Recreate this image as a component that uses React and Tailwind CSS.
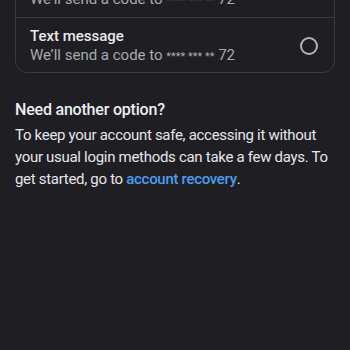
export default function App() {
  return (
    <div className="w-[350px] h-[350px] overflow-hidden bg-[#1f1f23] text-white" style={{ fontFamily: "Roboto, 'Noto Sans', sans-serif" }}>
      <div className="px-[15px]">
        <div className="mt-[-40px] rounded-[12px] border border-[#3a3b40]">
          <div className="flex items-center justify-between px-[14px] py-[8px] border-b border-[#3a3b40]">
            <div>
              <div className="text-[15px] leading-[20px] font-medium text-[#e8e9ec]">WhatsApp</div>
              <div className="text-[15px] leading-[20px] text-[#a7a9ad]">We’ll send a code to <span className="text-[11px] leading-none">**** *** **</span> 72</div>
            </div>
          </div>
          <div className="flex items-center justify-between px-[14px] pt-[9px] pb-[7px]">
            <div>
              <div className="text-[15px] leading-[19px] font-medium text-[#e8e9ec]">Text message</div>
              <div className="text-[15px] leading-[19px] text-[#a7a9ad]">We’ll send a code to <span className="text-[11px] leading-none">**** *** **</span> 72</div>
            </div>
            <div className="w-[18px] h-[18px] rounded-full border-[2px] border-[#b0b2b6] mr-[2px]" />
          </div>
        </div>
        <div className="mt-[27px] text-[16px] leading-[20px] font-medium tracking-[-0.2px] text-[#eceef0]">Need another option?</div>
        <p className="mt-[4px] text-[15px] leading-[22px] tracking-[-0.3px] text-[#e4e6ea]">
          To keep your account safe, accessing it without your usual login methods can take a few days. To get started, go to <span className="text-[#4a9cf0] font-medium">account recovery</span>.
        </p>
      </div>
    </div>
  );
}
